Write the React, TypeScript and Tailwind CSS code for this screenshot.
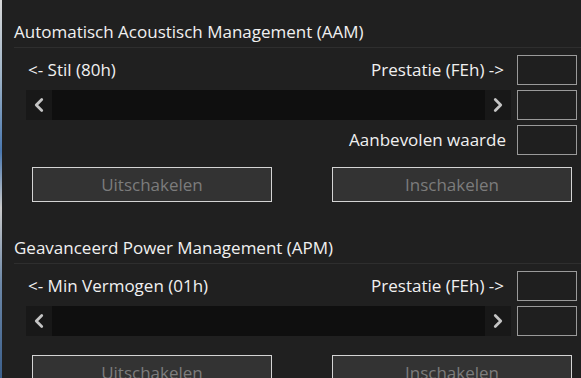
import { ChevronLeft, ChevronRight } from "lucide-react"

function ValueBox() {
  return <div className="w-[60px] h-[30px] shrink-0 border border-[#9a9a9a] bg-[#1f1f1f]" />
}

function ScrollBar() {
  return (
    <div className="flex h-[30px] flex-1 bg-[#0f0f0f]">
      <div className="flex w-[26px] items-center justify-center bg-[#181818] text-[#c4c4c4]">
        <ChevronLeft className="h-[22px] w-[22px]" strokeWidth={3} />
      </div>
      <div className="flex-1" />
      <div className="flex w-[26px] items-center justify-center bg-[#181818] text-[#c4c4c4]">
        <ChevronRight className="h-[22px] w-[22px]" strokeWidth={3} />
      </div>
    </div>
  )
}

function Buttons({ top }: { top: string }) {
  return (
    <div className={`flex pl-[18px] ${top}`}>
      <div className="flex h-[35px] w-[240px] items-center justify-center border border-[#d4d4d4] bg-[#333333] text-[#7c7c7c]">
        Uitschakelen
      </div>
      <div className="ml-[60px] flex h-[35px] w-[240px] items-center justify-center border border-[#d4d4d4] bg-[#333333] text-[#7c7c7c]">
        Inschakelen
      </div>
    </div>
  )
}

function Section({ title, left, recommended }: { title: string; left: string; recommended?: boolean }) {
  return (
    <div>
      <div className="h-[27px] border-b border-[#2e2e2e] leading-[22px]">{title}</div>
      <div className="flex flex-col gap-[5px] pt-[7px] pl-[12px] pr-[4px]">
        <div className="flex h-[30px] items-center">
          <span className="pl-[2px]">{left}</span>
          <span className="ml-auto mr-[13px]">Prestatie (FEh) -&gt;</span>
          <ValueBox />
        </div>
        <div className="flex h-[30px] items-center gap-[6px]">
          <ScrollBar />
          <ValueBox />
        </div>
        {recommended && (
          <div className="flex h-[30px] items-center">
            <span className="ml-auto mr-[11px]">Aanbevolen waarde</span>
            <ValueBox />
          </div>
        )}
      </div>
    </div>
  )
}

export default function App() {
  return (
    <div className="flex h-[378px] w-[581px] overflow-hidden bg-[#202020] font-['Segoe_UI','Open_Sans','Noto_Sans',sans-serif] text-[17px] text-[#f0f0f0]">
      {/* stukje bureaublad links */}
      <div className="w-[2px] shrink-0 bg-[linear-gradient(to_bottom,#d8d8d8_0%,#9fb4c8_20%,#4a78b0_40%,#c9c9c9_55%,#6d88a8_75%,#3b5f8c_100%)]" />
      <div className="flex-1 pl-[12px] pt-[21px]">
        <Section title="Automatisch Acoustisch Management (AAM)" left="<- Stil (80h)" recommended />
        <Buttons top="mt-[12px]" />
        <div className="mt-[35px]">
          <Section title="Geavanceerd Power Management (APM)" left="<- Min Vermogen (01h)" />
        </div>
        <Buttons top="mt-[19px]" />
      </div>
    </div>
  )
}
